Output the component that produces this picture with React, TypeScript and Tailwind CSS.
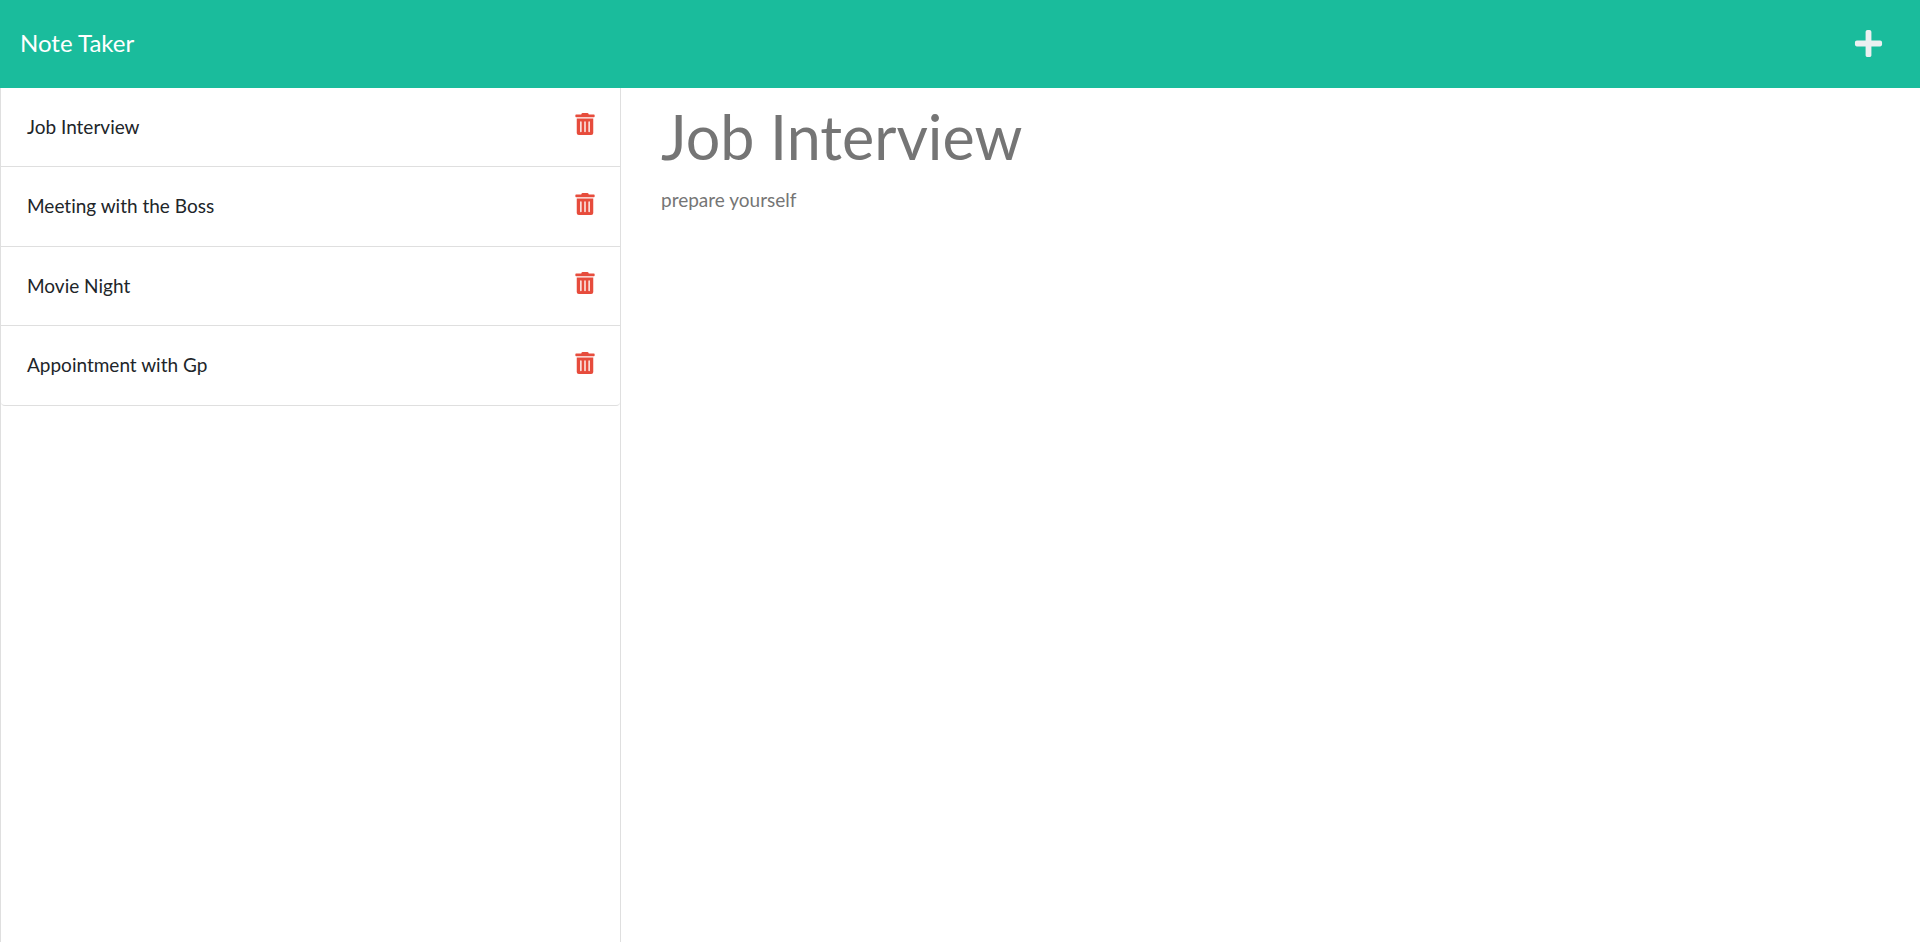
import React from "react";
import { FaPlus, FaTrashAlt } from "react-icons/fa";

const notes = ["Job Interview", "Meeting with the Boss", "Movie Night", "Appointment with Gp"];

export default function App() {
  return (
    <div className="flex min-h-screen flex-col bg-white font-['Lato',sans-serif] text-[#212529] [font-variant-ligatures:none]">
      <nav className="flex h-[88px] items-center justify-between bg-[#1abc9c] pr-9 pb-0.5 pl-5">
        <a href="#" className="text-2xl text-white">Note Taker</a>
        <button type="button" aria-label="New note" className="text-[31px] text-[#ecf0f1]">
          <FaPlus />
        </button>
      </nav>
      <main className="flex grow">
        <aside className="w-[621px] shrink-0 border-x border-[#dfdfdf]">
          <ul>
            {notes.map((note) => (
              <li key={note} className="flex h-[79px] items-center justify-between border-b border-[#dfdfdf] pr-6 pl-[26px] text-[19px] last:rounded-b even:h-20">
                <span>{note}</span>
                <button type="button" aria-label={`Delete ${note}`} className="pb-1.5 text-[22px] text-[#e74c3c]">
                  <FaTrashAlt />
                </button>
              </li>
            ))}
          </ul>
        </aside>
        <section className="flex grow flex-col gap-3 px-10 pt-[13px]">
          <input aria-label="Note title" readOnly placeholder="Note Title" defaultValue="Job Interview" className="block h-[72px] w-full text-[61px] leading-[72px] text-[#757575] outline-none" />
          <textarea aria-label="Note text" readOnly placeholder="Note Text" defaultValue="prepare yourself" className="block w-full resize-none text-[19px] leading-[30px] text-[#757575] outline-none" />
        </section>
      </main>
    </div>
  );
}
